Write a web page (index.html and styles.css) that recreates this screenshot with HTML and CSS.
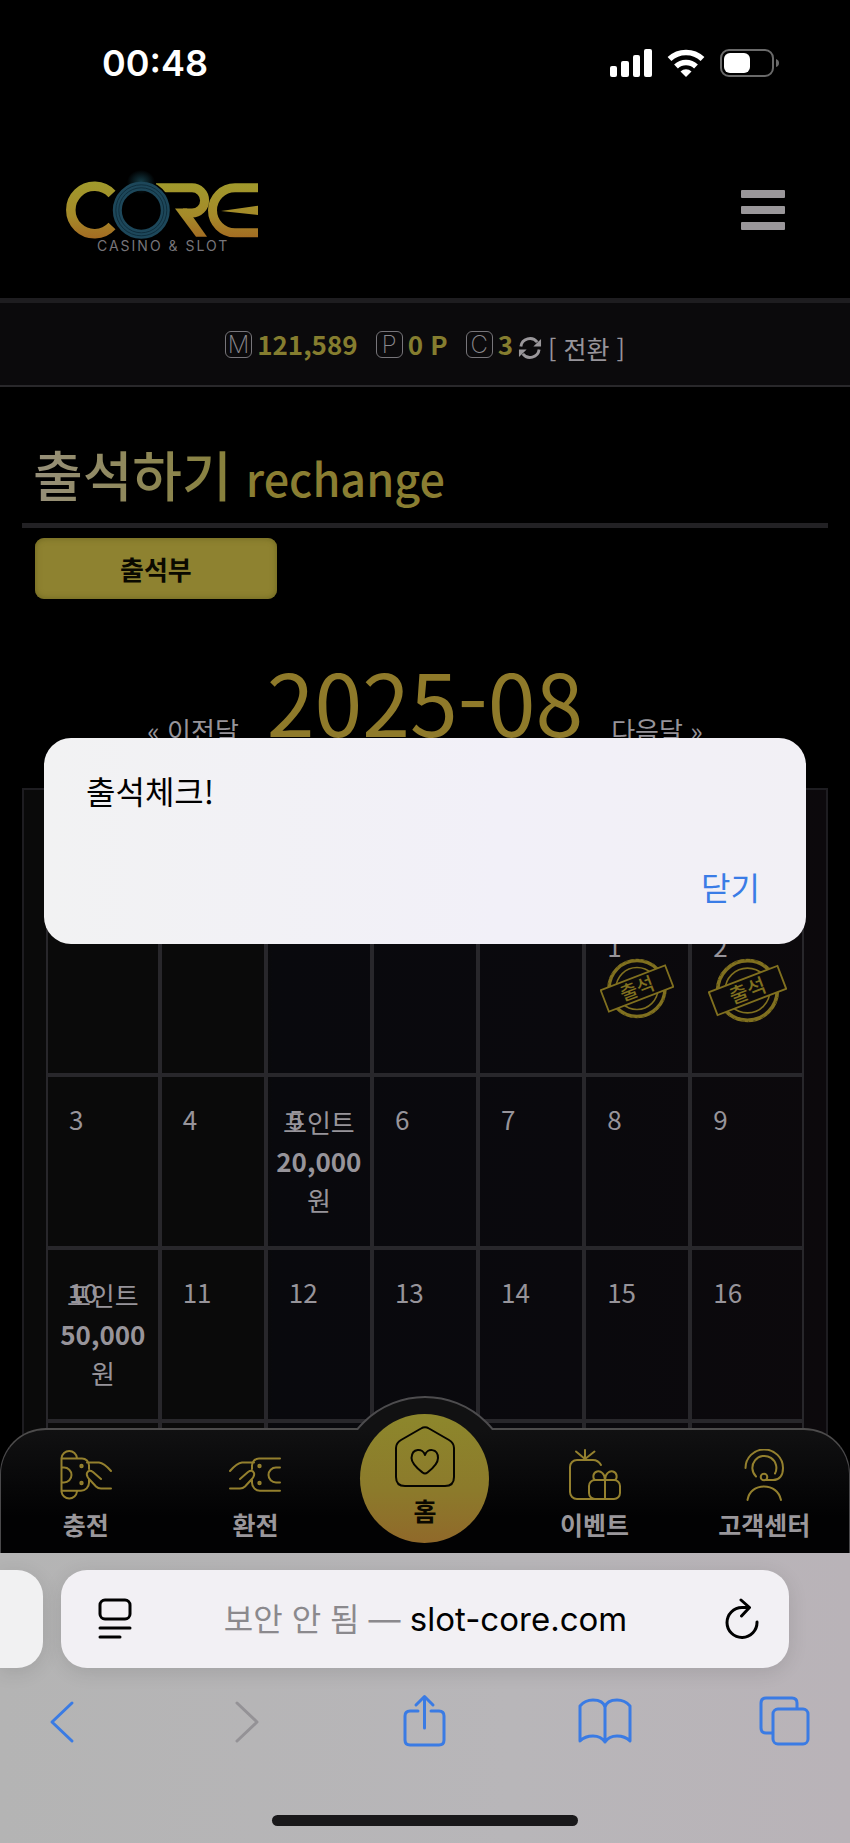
FILE: index.html
```html
<!DOCTYPE html>
<html lang="ko">
<head>
<meta charset="utf-8">
<meta name="viewport" content="width=device-width, initial-scale=1">
<title>출석하기</title>
<link rel="stylesheet" href="styles.css">
</head>
<body>
<div class="status-bar">
  <time class="clock">00:48</time>
  <svg class="status-icons" width="172" height="32" viewBox="608 47 172 32" aria-hidden="true">
    <g fill="#fff">
      <rect x="610" y="66" width="7" height="11" rx="2"/>
      <rect x="621" y="61" width="8" height="16" rx="2"/>
      <rect x="633" y="55" width="7" height="22" rx="2"/>
      <rect x="644" y="49" width="8" height="28" rx="2"/>
      <path d="M686 77l-5.500-5.500a8 8 0 0 1 11 0z"/>
    </g>
    <g fill="none" stroke="#fff" stroke-width="5.500">
      <path d="M676 66.500a14.500 14.500 0 0 1 20 0"/>
      <path d="M669.500 59a24 24 0 0 1 33 0"/>
    </g>
    <rect x="721" y="50" width="52" height="26" rx="8" fill="none" stroke="#6a6a6a" stroke-width="2"/>
    <rect x="724" y="53" width="26" height="20" rx="6" fill="#fff"/>
    <path d="M776 59q3 1 3 4t-3 4z" fill="#6a6a6a"/>
  </svg>
</div>

<div class="site">
  <header class="site-header">
    <a href="#" class="logo" aria-label="CORE CASINO &amp; SLOT">
      <svg width="196" height="80" viewBox="0 0 196 80">
        <defs>
          <linearGradient id="gold" gradientUnits="userSpaceOnUse" x1="0" y1="6" x2="0" y2="64">
            <stop offset="0" stop-color="#a09a2c"/><stop offset=".6" stop-color="#a58a29"/><stop offset="1" stop-color="#a36a22"/>
          </linearGradient>
          <radialGradient id="glow"><stop offset="0" stop-color="#1d5666"/><stop offset="1" stop-color="#1d5666" stop-opacity="0"/></radialGradient>
        </defs>
        <path d="M46 19A23.700 23.700 0 1 0 46 51" fill="none" stroke="url(#gold)" stroke-width="9.500"/>
        <path d="M90 12.800H126A12.500 12.500 0 0 1 126 38H117" fill="none" stroke="url(#gold)" stroke-width="9"/>
        <path d="M109 33.500H121L141 61.800H130Z" fill="url(#gold)"/>
        <path d="M192 12.800H169A22.500 22.500 0 0 0 169 57.800H192" fill="none" stroke="url(#gold)" stroke-width="9"/>
        <path d="M155 36L192 30.700V40Z" fill="url(#gold)"/>
        <circle cx="75.300" cy="35.300" r="30" fill="#000"/>
        <ellipse cx="75" cy="7" rx="14" ry="12" fill="url(#glow)" opacity=".7"/>
        <circle cx="75.300" cy="35.300" r="24" fill="none" stroke="#1d475a" stroke-width="9"/>
        <circle cx="75.300" cy="35.300" r="25.500" fill="none" stroke="#0f2e3d" stroke-width="1"/>
        <circle cx="75.300" cy="35.300" r="22.500" fill="none" stroke="#0f2e3d" stroke-width="1"/>
        <text x="31" y="76" class="logo-tag">CASINO &amp; SLOT</text>
      </svg>
    </a>
    <button class="menu" type="button" aria-label="메뉴"><span></span><span></span><span></span></button>
  </header>

  <section class="wallet">
    <div class="coin"><span class="coin-badge">M</span><b>121,589</b></div>
    <div class="coin"><span class="coin-badge">P</span><b>0 P</b></div>
    <div class="coin"><span class="coin-badge">C</span><b>3</b>
      <button class="convert" type="button">
        <svg width="24" height="24" viewBox="0 0 25 25" aria-hidden="true">
          <g fill="none" stroke="#9a979b" stroke-width="3"><path d="M3 11a9.500 9.500 0 0 1 17-4.500"/><path d="M22 14a9.500 9.500 0 0 1-17 4.500"/></g>
          <path d="M24 3v8h-8zM1 22v-8h8z" fill="#9a979b"/>
        </svg>
        <span>[ 전환 ]</span>
      </button>
    </div>
  </section>

  <main class="content">
    <h1 class="title"><span class="title-ko">출석하기</span><span class="title-en">rechange</span></h1>
    <button class="tab" type="button">출석부</button>
    <div class="month">
      <a href="#">« 이전달</a><h2>2025-08</h2><a href="#">다음달 »</a>
    </div>
    <div class="calendar">
      <table>
        <colgroup><col class="edge"><col span="5"><col class="edge"></colgroup>
        <tbody>
          <tr><td></td><td></td><td></td><td></td><td></td>
            <td><span class="day">1</span>
              <svg class="stamp" width="74" height="61" viewBox="0 0 74 61">
                <g fill="none" stroke="#80701f"><circle cx="37" cy="30.500" r="28" stroke-width="3.500"/><circle cx="37" cy="30.500" r="21" stroke-width="1.500"/></g>
                <circle cx="37" cy="30.500" r="29" fill="none" stroke="#3c350f" stroke-width=".6" stroke-dasharray="2 4 1 3 3 6"/>
                <g transform="rotate(-21 37 30.500)"><rect x="2.500" y="19" width="69" height="23" fill="#0b090b" stroke="#80701f" stroke-width="1.800"/><text x="37" y="37.500" class="stamp-text">출석</text></g>
              </svg></td>
            <td><span class="day">2</span>
              <svg class="stamp" width="79" height="65" viewBox="0 0 74 61">
                <g fill="none" stroke="#80701f"><circle cx="37" cy="30.500" r="28" stroke-width="3.500"/><circle cx="37" cy="30.500" r="21" stroke-width="1.500"/></g>
                <circle cx="37" cy="30.500" r="29" fill="none" stroke="#3c350f" stroke-width=".6" stroke-dasharray="2 4 1 3 3 6"/>
                <g transform="rotate(-21 37 30.500)"><rect x="2.500" y="19" width="69" height="23" fill="#0b090b" stroke="#80701f" stroke-width="1.800"/><text x="37" y="37.500" class="stamp-text">출석</text></g>
              </svg></td></tr>
          <tr><td><span class="day">3</span></td><td><span class="day">4</span></td>
            <td><span class="day">5</span><div class="reward">포인트<b>20,000</b>원</div></td>
            <td><span class="day">6</span></td><td><span class="day">7</span></td><td><span class="day">8</span></td><td><span class="day">9</span></td></tr>
          <tr><td><span class="day">10</span><div class="reward">포인트<b>50,000</b>원</div></td>
            <td><span class="day">11</span></td><td><span class="day">12</span></td><td><span class="day">13</span></td><td><span class="day">14</span></td><td><span class="day">15</span></td><td><span class="day">16</span></td></tr>
          <tr><td></td><td></td><td></td><td></td><td></td><td></td><td></td></tr>
        </tbody>
      </table>
    </div>
  </main>

  <nav class="dock">
    <div class="bulge"></div>
    <a href="#" class="dock-item">
      <svg class="gold-icon" width="52" height="52" viewBox="0 0 52 52" aria-hidden="true">
        <path d="M1.500 9V43M1.500 9A7.800 8 0 0 1 17 9M1.500 42.500A7.800 8 0 0 0 17 42.500M1.500 9.500H22a7 7 0 0 1 7 7V20M1.500 41.700H21a8 8 0 0 0 8-8V31M1.500 18.500H4a7.500 7.500 0 0 1 0 15H1.500M27 13.500H39Q44 14 51 22M41 30L33 23Q29 20 27 24Q26 27 30 31L36 37.500Q38 39.500 41 39.500H51"/>
        <circle cx="21.500" cy="17" r="1.200"/><circle cx="21.500" cy="34" r="1.200"/>
      </svg>
      <span>충전</span></a>
    <a href="#" class="dock-item">
      <svg class="gold-icon" width="52" height="52" viewBox="0 0 52 52" aria-hidden="true">
        <g transform="translate(52 0) scale(-1 1)"><path d="M1 9.500H22a7 7 0 0 1 7 7V20M1 41.700H21a8 8 0 0 0 8-8V31M1 18.500H5a7.500 7.500 0 0 1 0 15H1M27 13.500H39Q44 14 51 22M41 30L33 23Q29 20 27 24Q26 27 30 31L36 37.500Q38 39.500 41 39.500H51"/>
        <circle cx="21.500" cy="17" r="1.200"/><circle cx="21.500" cy="34" r="1.200"/></g>
      </svg>
      <span>환전</span></a>
    <a href="#" class="dock-item">
      <span class="home">
        <svg width="60" height="62" viewBox="0 0 60 62" fill="none" stroke="#060500" stroke-width="2" stroke-linecap="round" stroke-linejoin="round" aria-hidden="true">
          <path d="M26 2.500Q30 0 34 2.500L54 14Q59 17 59 22V51Q59 60 50 60H10Q1 60 1 51V22Q1 17 6 14Z"/>
          <path d="M30 29C28 22 17 21.500 16.500 32C16.500 38 23 43 27.500 46.500Q30 48.500 32.500 46.500C37 43 43 38 43 32C43 22 32 22 30 29Z"/>
        </svg>
        <span>홈</span>
      </span></a>
    <a href="#" class="dock-item">
      <svg class="gold-icon" width="52" height="52" viewBox="0 0 52 52" aria-hidden="true">
        <path d="M32 16Q29 11 24 11H8a7 7 0 0 0-7 7V43a7 7 0 0 0 7 7H26M16 10V1M16 10L7 2.500M16 10L25.500 2.500M36 31V50M36 31C36 25 32 21.500 28 22.500C23 24 24 30 26 31M36 31C36 25 40 21.500 44 22.500C49 24 48 30 46 31"/>
        <rect x="20" y="31" width="31" height="19" rx="6"/>
      </svg>
      <span>이벤트</span></a>
    <a href="#" class="dock-item">
      <svg class="gold-icon" width="52" height="52" viewBox="0 0 52 52" aria-hidden="true">
        <path d="M7.500 19A18.700 18.500 0 0 1 45 19C45 27 41 31 35 31H28M18 27.500A12 12 0 1 1 37 24.500M9.500 51C11 42 18 37.500 26 37.500C34 37.500 41 42 43 51"/>
        <circle cx="26" cy="28" r="3.300"/>
      </svg>
      <span>고객센터</span></a>
  </nav>

  <dialog class="alert" open>
    <p>출석체크!</p>
    <button type="button">닫기</button>
  </dialog>
</div>

<footer class="browser">
  <div class="tabs-row">
    <div class="side-tab"></div>
    <div class="address">
      <button type="button" aria-label="페이지 메뉴">
        <svg width="34" height="42" viewBox="0 0 34 42" fill="none" stroke="#000" stroke-width="3" stroke-linecap="round"><rect x="2" y="2" width="30" height="19" rx="5"/><path d="M2 30H32M2 39H22"/></svg>
      </button>
      <div class="url"><span>보안 안 됨 —</span> slot-core.com</div>
      <button type="button" aria-label="새로고침">
        <svg width="34" height="42" viewBox="0 0 34 42" fill="none" stroke="#000" stroke-width="3" stroke-linecap="round" stroke-linejoin="round"><path d="M32 24A15 15 0 1 1 17 9.500H24M16 2L24.500 9.500L16.500 18"/></svg>
      </button>
    </div>
  </div>
  <div class="tools">
    <button type="button" aria-label="뒤로"><svg width="56" height="56" viewBox="0 0 56 56"><path d="M38 9L18 28L38 47"/></svg></button>
    <button type="button" aria-label="앞으로" disabled><svg width="56" height="56" viewBox="0 0 56 56"><path d="M22 9L42 28L22 47"/></svg></button>
    <button type="button" aria-label="공유"><svg width="56" height="56" viewBox="0 0 56 56"><path d="M22 17H14Q9 17 9 22V46Q9 51 14 51H43Q48 51 48 46V22Q48 17 43 17H35M28.500 34V3M20 11L28.500 2.500L37 11"/></svg></button>
    <button type="button" aria-label="책갈피"><svg width="56" height="56" viewBox="0 0 56 56"><path d="M29 13Q27 6 17 6Q9 6 4 12V47Q9 42 17 42Q25 42 29 48Q33 42 41 42Q49 42 54 47V12Q49 6 41 6Q31 6 29 13V48"/></svg></button>
    <button type="button" aria-label="탭"><svg width="56" height="56" viewBox="0 0 56 56"><rect x="16" y="15" width="35" height="35" rx="5"/><path d="M15 39H9Q4 39 4 34V9Q4 4 9 4H35Q40 4 40 9V14"/></svg></button>
  </div>
  <div class="home-indicator"></div>
</footer>
</body>
</html>
```

FILE: styles.css
```css
*, *::before { box-sizing: border-box; }

body {
  margin: 0;
  height: 100vh;
  display: flex;
  flex-direction: column;
  background: #000;
  color: #97949a;
  font-family: "Noto Sans CJK KR", sans-serif;
  font-size: 26px;
  line-height: 38px;
}

a { color: inherit; text-decoration: none; }

button {
  border: 0;
  padding: 0;
  background: none;
  color: inherit;
  font: inherit;
}

svg { display: block; }

/* status bar */
.status-bar {
  flex: none;
  height: 128px;
  display: flex;
  justify-content: space-between;
  align-items: center;
  padding: 0 70px 2px 102px;
}

.clock {
  color: #fff;
  font-family: Inter, sans-serif;
  font-size: 36px;
  font-weight: 600;
}

/* site */
.site {
  flex: 1;
  min-height: 0;
  position: relative;
  overflow: hidden;
}

.site-header {
  height: 175px;
  display: flex;
  justify-content: space-between;
  align-items: center;
  padding: 0 65px 6px 66px;
  border-bottom: 5px solid #1e1d20;
}

.logo { padding-top: 10px; }

.logo svg { overflow: visible; }

.logo-tag {
  fill: #77757a;
  font-family: Inter, sans-serif;
  font-size: 14px;
  letter-spacing: 2px;
}

.menu {
  width: 44px;
  display: grid;
  gap: 8px;
}

.menu span {
  height: 8px;
  border-radius: 1px;
  background: #9a979a;
}

.wallet {
  height: 84px;
  display: flex;
  justify-content: center;
  align-items: center;
  gap: 18px;
  background: #0b0a0c;
  border-bottom: 2px solid #29282b;
}

.coin {
  display: flex;
  align-items: center;
  gap: 5px;
  color: #857d2f;
}

.coin-badge {
  width: 27px;
  height: 27px;
  border: 1px solid #77757a;
  border-radius: 6px;
  color: #8a888d;
  font-family: Inter, sans-serif;
  font-size: 24px;
  font-weight: 200;
  line-height: 25px;
  text-align: center;
}

.convert {
  display: flex;
  align-items: center;
  gap: 6px;
  padding-top: 8px;
  color: #97949a;
  font-size: 25px;
}

.content { padding: 0 22px; }

.title {
  display: flex;
  align-items: baseline;
  gap: 14px;
  height: 141px;
  margin: 0;
  padding: 49px 11px 0;
  border-bottom: 5px solid #222124;
  line-height: 76px;
}

.title-ko {
  background: linear-gradient(90deg, #97907a, #87803a);
  background-clip: text;
  color: transparent;
  font-size: 54px;
  font-weight: 500;
}

.title-en {
  color: #8a7e32;
  font-size: 45px;
  font-weight: 500;
}

.tab {
  display: block;
  width: 30%;
  height: 61px;
  margin: 10px 0 0 13px;
  border-radius: 9px;
  background: #8e8230;
  box-shadow: inset 0 0 6px #6b641f;
  color: #0a0900;
  font-weight: 700;
}

.month {
  display: flex;
  justify-content: center;
  align-items: flex-start;
  gap: 28px;
  margin: 51px 0 8px;
  line-height: 100px;
}

.month a { padding-top: 30px; }

.month h2 {
  margin: 0;
  color: #8f7a2a;
  font-size: 86px;
  font-weight: 400;
}

.calendar {
  padding: 112px 22px 0;
  border: 2px solid #1e1d21;
  border-bottom: 0;
  background: linear-gradient(90deg, #0a0a0a 30%, #09090d 31%, #0a090d 70%, #0c090c);
}

.calendar table {
  width: 100%;
  table-layout: fixed;
  border-spacing: 0;
}

.calendar .edge { width: 15%; }

.calendar td {
  position: relative;
  height: 173px;
  padding: 28px 0 0;
  border: 2px solid #28272b;
  vertical-align: top;
}

.day {
  display: block;
  padding-left: 21px;
  line-height: 28px;
}

.stamp { margin: -2px auto 0; }

.stamp-text {
  fill: #80701f;
  font-size: 19px;
  font-weight: 500;
  text-anchor: middle;
}

.reward {
  position: absolute;
  inset: 25px 0 auto;
  line-height: 39px;
  text-align: center;
}

.reward b { display: block; }

/* bottom dock */
.dock {
  position: absolute;
  inset: auto 0 0;
  height: 125px;
  display: flex;
  border: 1px solid #4a494b;
  border-top: 2px solid #4d4c4c;
  border-bottom: 0;
  border-radius: 46px 46px 0 0;
  background: linear-gradient(#111112, #020203 70%);
  color: #9a979b;
  font-size: 25px;
  font-weight: 700;
}

.bulge {
  position: absolute;
  left: 50%;
  top: -34px;
  width: 138px;
  height: 34px;
  margin-left: -69px;
  overflow: hidden;
}

.bulge::before {
  content: "";
  position: absolute;
  left: 50%;
  top: 0;
  width: 176px;
  height: 176px;
  margin-left: -88px;
  border: 2px solid #4d4c4e;
  border-radius: 50%;
  background: #111112;
}

.dock-item {
  flex: 1 1 0;
  display: flex;
  flex-direction: column;
  align-items: center;
  gap: 4px;
  padding-top: 19px;
}

.gold-icon {
  fill: none;
  stroke: #94802e;
  stroke-width: 2;
  stroke-linecap: round;
  stroke-linejoin: round;
}

.home {
  position: relative;
  width: 129px;
  height: 129px;
  margin-top: -35px;
  padding-top: 12px;
  flex: none;
  display: flex;
  flex-direction: column;
  align-items: center;
  gap: 3px;
  border-radius: 50%;
  background: linear-gradient(#8d872c, #8c7a2b 60%, #90692a);
  color: #0a0800;
}

/* alert */
.alert {
  position: absolute;
  inset: 610px 44px auto;
  width: auto;
  height: 206px;
  margin: 0;
  padding: 28px 46px 34px 42px;
  display: flex;
  flex-direction: column;
  justify-content: space-between;
  border: 0;
  border-radius: 27px;
  background: linear-gradient(90deg, #f2f2f3, #f2f0f8 60%, #f2f0f5);
  color: #000;
  font-size: 32px;
  line-height: 48px;
}

.alert p { margin: 0; }

.alert button {
  align-self: flex-end;
  color: #3a7ce6;
}

/* browser chrome */
.browser {
  flex: none;
  height: 290px;
  padding-top: 17px;
  display: flex;
  flex-direction: column;
  background: linear-gradient(90deg, #b4b4b4, #b8b6b9 60%, #b9b3b8);
}

.tabs-row {
  display: flex;
  gap: 18px;
  padding-right: 61px;
}

.side-tab {
  width: 43px;
  border-radius: 0 26px 26px 0;
  background: #f1f1f2;
  box-shadow: 0 4px 20px #0000001c;
}

.address {
  flex: 1;
  height: 98px;
  display: flex;
  justify-content: space-between;
  align-items: center;
  padding: 0 30px 0 37px;
  border-radius: 26px;
  background: #f2f0f4;
  box-shadow: 0 4px 20px #0000001c;
}

.url {
  flex: 1;
  padding-right: 6px;
  color: #000;
  font-family: Inter, "Noto Sans CJK KR", sans-serif;
  font-size: 33px;
  text-align: center;
}

.url span {
  color: #8b898d;
  font-size: 32px;
}

.tools {
  display: flex;
  justify-content: space-between;
  padding: 26px 37px 0 34px;
  color: #3a7be4;
}

.tools button:disabled { color: #949296; }

.tools svg {
  fill: none;
  stroke: currentColor;
  stroke-width: 3;
  stroke-linecap: round;
  stroke-linejoin: round;
}

.home-indicator {
  width: 36%;
  height: 11px;
  margin: auto auto 17px;
  border-radius: 6px;
  background: #19181a;
}
```
